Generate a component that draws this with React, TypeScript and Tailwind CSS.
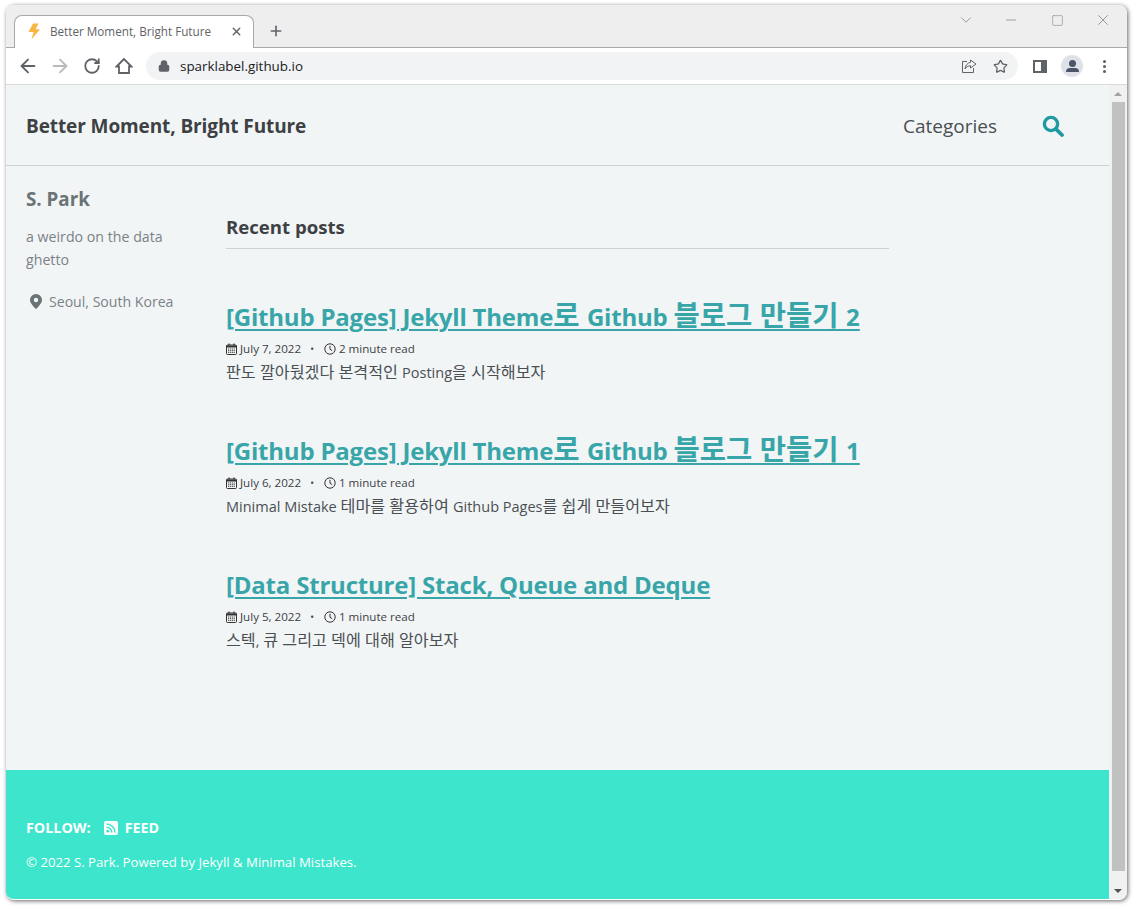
import { Lock, Star, Minus, X, ChevronDown, Plus, ArrowLeft, ArrowRight, RotateCw, Square } from "lucide-react";

const FONT = { fontFamily: '"Open Sans", "Noto Sans CJK KR", sans-serif' };

const POSTS = [
  { title: "[Github Pages] Jekyll Theme로 Github 블로그 만들기 2", date: "July 7, 2022", read: "2 minute read", excerpt: "판도 깔아뒀겠다 본격적인 Posting을 시작해보자" },
  { title: "[Github Pages] Jekyll Theme로 Github 블로그 만들기 1", date: "July 6, 2022", read: "1 minute read", excerpt: "Minimal Mistake 테마를 활용하여 Github Pages를 쉽게 만들어보자" },
  { title: "[Data Structure] Stack, Queue and Deque", date: "July 5, 2022", read: "1 minute read", excerpt: "스텍, 큐 그리고 덱에 대해 알아보자" },
];

// hangul runs sit larger than the latin around them
function Mixed({ text, hangul }: { text: string; hangul: string }) {
  return (
    <>
      {text.split(/([가-힣][가-힣 ]*)/).map((part, i) =>
        i % 2 === 1 ? <span key={i} className={hangul}>{part}</span> : <span key={i}>{part}</span>
      )}
    </>
  );
}

function CalendarIcon() {
  return (
    <svg width="11" height="12" viewBox="0 0 11 12" className="shrink-0">
      <path d="M1.5 2h8a1 1 0 0 1 1 1v7.5a1 1 0 0 1-1 1h-8a1 1 0 0 1-1-1V3a1 1 0 0 1 1-1z" fill="none" stroke="#333" />
      <path d="M0.5 2.5h10v2h-10z" fill="#333" />
      <path d="M3 0.5v2M8 0.5v2" stroke="#333" strokeWidth="1.2" />
      <path d="M2 6h7M2 7.7h7M2 9.4h7" stroke="#333" strokeWidth="0.9" strokeDasharray="1.2 .7" />
    </svg>
  );
}

function ClockIcon() {
  return (
    <svg width="12" height="12" viewBox="0 0 12 12" className="shrink-0">
      <circle cx="6" cy="6" r="5.2" fill="none" stroke="#333" strokeWidth="1" />
      <path d="M6 2.8V6.3L8.2 7.6" fill="none" stroke="#333" strokeWidth="1" />
    </svg>
  );
}

function Post({ title, date, read, excerpt }: (typeof POSTS)[number]) {
  return (
    <article className="mb-[50px]">
      <h2 className="text-[24px] leading-[34px] font-bold tracking-[-0.2px] text-[#38a6a9] underline decoration-2 underline-offset-[3px] whitespace-nowrap">
        <a href="#"><Mixed text={title} hangul="text-[1.19em] leading-none tracking-normal" /></a>
      </h2>
      <p className="mt-[6px] flex items-center h-[18px] text-[11.6px] text-[#3d4144]">
        <CalendarIcon />
        <span className="ml-[3px]">{date}</span>
        <span className="ml-[9px] mr-[10px] text-[10px]">•</span>
        <ClockIcon />
        <span className="ml-[3px]">{read}</span>
      </p>
      <p className="mt-[3px] text-[14.5px] leading-[23px] text-[#4a4f53] whitespace-nowrap">
        <Mixed text={excerpt} hangul="text-[1.115em] leading-none" />
      </p>
    </article>
  );
}

function BrowserChrome() {
  return (
    <div className="shrink-0">
      <div className="h-[43px] bg-[#eeeeee] border-b border-[#a9a9a9] flex items-end pl-[8px] relative">
        <div className="w-[240px] h-[33px] -mb-px bg-white border border-b-0 border-[#a9a9a9] rounded-t-[8px] flex items-center pl-[12px] pr-[10px] pb-px">
          <svg width="14" height="17" viewBox="0 0 14 17" className="shrink-0">
            <path d="M6 0.5h5.5L8.6 6.2H13L4.5 16.5 6.6 9H1.5z" fill="#f7b544" />
          </svg>
          <span className="ml-[9px] flex-1 text-[11.7px] text-[#5f6368] whitespace-nowrap">Better Moment, Bright Future</span>
          <X size={13} strokeWidth={2.5} className="text-[#5f6368]" />
        </div>
        <Plus size={16} strokeWidth={2.4} className="ml-[14px] mb-[8px] text-[#5f6368]" />
        <div className="absolute right-0 top-0 h-[30px] flex items-center pr-[15px] text-[#7d7d7d]">
          <ChevronDown size={18} strokeWidth={1} className="mr-[28px]" />
          <Minus size={16} strokeWidth={1} className="mr-[32px]" />
          <Square size={13} strokeWidth={1} className="mr-[30px]" />
          <X size={18} strokeWidth={1} />
        </div>
      </div>
      <div className="h-[37px] bg-white border-b border-[#d9d9d9] flex items-center pl-[11px] pr-[14px]">
        <ArrowLeft size={22} strokeWidth={2} className="text-[#5f6368]" />
        <ArrowRight size={22} strokeWidth={2} className="ml-[10px] text-[#b9bbbe]" />
        <RotateCw size={18} strokeWidth={2.4} className="ml-[12px] text-[#5f6368]" />
        <svg width="18" height="18" viewBox="0 0 18 18" className="ml-[14px]">
          <path d="M9 2L1.5 9.5H4V16H14V9.5H16.5z" fill="none" stroke="#5f6368" strokeWidth="1.8" strokeLinejoin="miter" />
        </svg>
        <div className="ml-[13px] w-[872px] h-[28px] rounded-full bg-[#f1f3f4] flex items-center pl-[12px] pr-[10px]">
          <Lock size={12} strokeWidth={3} className="text-[#5f6368]" fill="#5f6368" />
          <span className="ml-[10px] flex-1 text-[13.4px] text-[#202124]">sparklabel.github.io</span>
          <svg width="16" height="16" viewBox="0 0 16 16">
            <path d="M6 3.5H1.5V14.5H12.5V10" fill="none" stroke="#5f6368" strokeWidth="1" />
            <path d="M9.5 2L15 6 9.5 10V7.8C7 7.8 5.2 8.8 4 11 4.3 7.6 6.4 4.8 9.5 4.3z" fill="none" stroke="#5f6368" strokeWidth="1" />
          </svg>
          <Star size={15} strokeWidth={2} className="ml-[16px] text-[#5f6368]" />
        </div>
        <div className="ml-[15px] w-[14px] h-[13px] border-[2px] border-r-[6px] border-[#5f6368]" />
        <div className="ml-[14px] w-[22px] h-[22px] rounded-full bg-[#dee1e6] flex flex-col items-center justify-center">
          <div className="w-[7px] h-[7px] rounded-full bg-[#4a5568]" />
          <div className="mt-px w-[13px] h-[4px] rounded-t-full bg-[#4a5568]" />
        </div>
        <div className="ml-[20px] flex flex-col gap-[2px]">
          <div className="w-[3px] h-[3px] rounded-full bg-[#5f6368]" />
          <div className="w-[3px] h-[3px] rounded-full bg-[#5f6368]" />
          <div className="w-[3px] h-[3px] rounded-full bg-[#5f6368]" />
        </div>
      </div>
    </div>
  );
}

function Scrollbar() {
  return (
    <div className="w-[18px] shrink-0 bg-[#f1f1f1] flex flex-col items-center">
      <div className="h-[17px] flex items-center justify-center">
        <div className="w-0 h-0 border-x-[4px] border-x-transparent border-b-[4px] border-b-[#a3a3a3]" />
      </div>
      <div className="w-[13px] flex-1 bg-[#c1c1c1]" />
      <div className="h-[28px] flex items-end justify-center pb-[6px]">
        <div className="w-0 h-0 border-x-[4px] border-x-transparent border-t-[4px] border-t-[#505050]" />
      </div>
    </div>
  );
}

export default function App() {
  return (
    <div className="w-[1136px] h-[909px] bg-white pl-[6px] pt-[5px] overflow-hidden" style={FONT}>
      <div className="w-[1121px] h-[895px] rounded-[8px] overflow-hidden flex flex-col bg-[#f2f5f6] border-b border-white shadow-[1px_1px_4px_rgba(0,0,0,0.6)]">
        <BrowserChrome />
        <div className="flex-1 flex min-h-0">
          <div className="flex-1 flex flex-col min-w-0">
            <header className="h-[81px] shrink-0 border-b border-[#ccd1d3] flex items-center pt-[2px] pl-[20px] pr-[45px]">
              <span className="flex-1 text-[19px] tracking-[-0.1px] font-bold text-[#3d4144]">Better Moment, Bright Future</span>
              <a href="#" className="text-[19px] text-[#494e52]">Categories</a>
              <svg width="22" height="22" viewBox="0 0 22 22" className="ml-[45px]">
                <circle cx="9" cy="9" r="6.6" fill="none" stroke="#1e9aa0" strokeWidth="3.4" />
                <path d="M13.8 13.8L20 20" stroke="#1e9aa0" strokeWidth="3.8" strokeLinecap="round" />
              </svg>
            </header>
            <div className="flex-1 flex pl-[20px]">
              <aside className="w-[200px] shrink-0 pt-[18px]">
                <h3 className="text-[18.8px] leading-[30px] font-bold text-[#6a7375]">S. Park</h3>
                <p className="mt-[11px] w-[170px] text-[14.2px] leading-[23px] text-[#7a8288]">a weirdo on the data ghetto</p>
                <p className="mt-[19px] flex items-center text-[14.1px] leading-[23px] text-[#7a8288]">
                  <svg width="12" height="15" viewBox="0 0 12 15" className="ml-[4px] shrink-0">
                    <path fillRule="evenodd" d="M6 0a6 6 0 0 1 6 6c0 3-3.6 6.9-6 9-2.4-2.1-6-6-6-9a6 6 0 0 1 6-6zm0 3.8a2.2 2.2 0 1 0 0 4.4 2.2 2.2 0 0 0 0-4.4z" fill="#6a7375" />
                  </svg>
                  <span className="ml-[7px]">Seoul, South Korea</span>
                </p>
              </aside>
              <main className="w-[663px] pt-[46px]">
                <h3 className="h-[37px] text-[18.6px] leading-[29px] font-bold text-[#3d4144] border-b border-[#ccd1d3]">Recent posts</h3>
                <div className="mt-[51px]">
                  {POSTS.map((post) => (
                    <Post key={post.title} {...post} />
                  ))}
                </div>
              </main>
            </div>
            <footer className="h-[129px] shrink-0 bg-[#3ce5cb] pl-[20px] pt-[47px] text-white">
              <div className="flex items-center h-[21px] text-[14.3px] font-bold">
                <span>FOLLOW:</span>
                <svg width="14" height="14" viewBox="0 0 14 14" className="ml-[13px]">
                  <rect width="14" height="14" rx="2" fill="#fff" />
                  <circle cx="3.8" cy="10.2" r="1.4" fill="#3ce5cb" />
                  <path d="M2.5 6.2a5.3 5.3 0 0 1 5.3 5.3M2.5 3a8.5 8.5 0 0 1 8.5 8.5" fill="none" stroke="#3ce5cb" strokeWidth="1.5" />
                </svg>
                <span className="ml-[7px]">FEED</span>
              </div>
              <p className="mt-[14px] text-[13.2px] leading-[21px] whitespace-nowrap">© 2022 S. Park. Powered by Jekyll &amp; Minimal Mistakes.</p>
            </footer>
          </div>
          <Scrollbar />
        </div>
      </div>
    </div>
  );
}
